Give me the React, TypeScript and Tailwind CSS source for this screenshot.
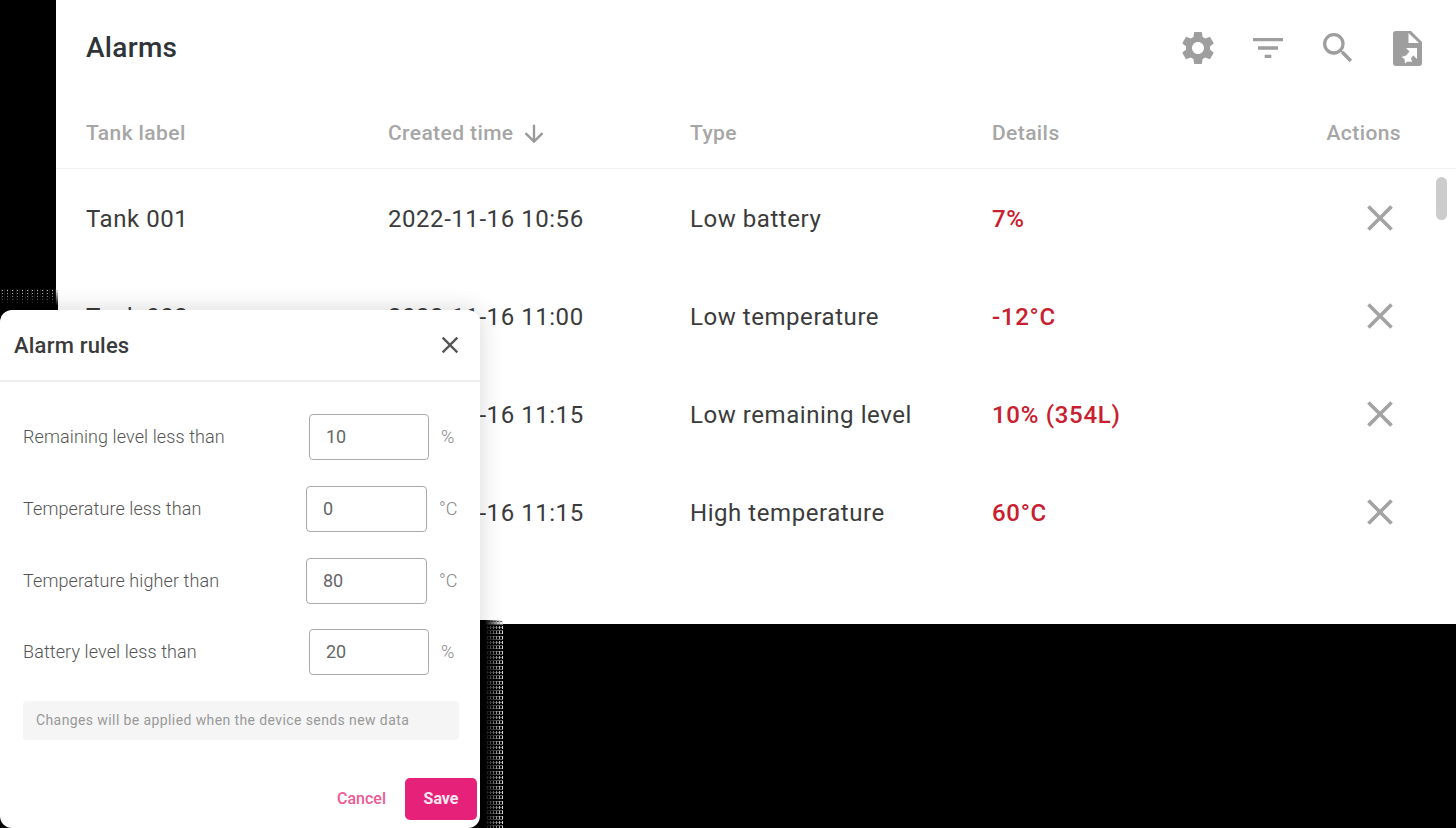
import { MdSettings, MdFilterList, MdSearch, MdClose, MdArrowDownward } from "react-icons/md";

const ROWS = [
  { tank: "Tank 001", time: "2022-11-16 10:56", type: "Low battery", details: "7%" },
  { tank: "Tank 002", time: "2022-11-16 11:00", type: "Low temperature", details: "-12°C" },
  { tank: "Tank 003", time: "2022-11-16 11:15", type: "Low remaining level", details: "10% (354L)" },
  { tank: "Tank 004", time: "2022-11-16 11:15", type: "High temperature", details: "60°C" },
];

const RULES = [
  { label: "Remaining level less than", value: "10", unit: "%" },
  { label: "Temperature less than", value: "0", unit: "°C" },
  { label: "Temperature higher than", value: "80", unit: "°C" },
  { label: "Battery level less than", value: "20", unit: "%" },
];

const FileIcon = () => (
  <svg viewBox="0 0 29 35" className="ml-[5px] h-[35px] w-[29px] fill-[#9e9e9e]">
    <path d="M3 0H18L29 11V32a3 3 0 0 1-3 3H3a3 3 0 0 1-3-3V3a3 3 0 0 1 3-3Z" />
    <path d="M15.500 2 26 12H15.500Z" fill="#fff" />
    <path
      d="M13 17H24V28L20.500 24.500 18 27 19 31 14.500 30.500 12 32.500 11.500 28 8.500 26 13 24.500 16.500 20.500Z"
      fill="#fff"
    />
  </svg>
);

const Rule = ({ label, value, unit }: { label: string; value: string; unit: string }) => {
  const percent = unit === "%";
  return (
    <div className="flex h-[46px] items-center last:-mt-px">
      <div className="flex-1 text-lg font-light tracking-[0.1px] text-[#555]">{label}</div>
      <div
        className={`flex h-[46px] items-center rounded-[4px] border border-[#aaa] pl-4 text-lg text-[#666] ${
          percent ? "w-[120px]" : "w-[121px]"
        }`}
      >
        {value}
      </div>
      <div className={`ml-3 text-lg font-light text-[#888] ${percent ? "w-[29px]" : "w-[31px]"}`}>{unit}</div>
    </div>
  );
};

export default function App() {
  return (
    <div className="relative h-[828px] w-[1456px] overflow-hidden bg-black font-['Roboto',sans-serif]">
      <div className="ml-14 h-[624px] bg-white">
        <div className="flex h-24 items-center justify-between pl-[30px] pr-[34px]">
          <h1 className="text-[28px] font-medium tracking-[0.3px] text-[#2f3439]">Alarms</h1>
          <div className="flex items-center gap-[30px] text-[#9e9e9e]">
            <MdSettings size={40} />
            <MdFilterList size={40} />
            <MdSearch size={40} />
            <FileIcon />
          </div>
        </div>

        <div className="grid h-[73px] grid-cols-[302px_302px_302px_1fr_auto] items-center border-b border-[#f2f2f2] pl-[30px] pr-[55px] pt-1 text-[21px] font-medium tracking-[0.4px] text-[#a6a6a6]">
          <div>Tank label</div>
          <div className="flex items-center gap-1.5">
            Created time
            <MdArrowDownward size={28} className="text-[#999]" />
          </div>
          <div>Type</div>
          <div>Details</div>
          <div>Actions</div>
        </div>

        <div className="relative">
          {ROWS.map((row) => (
            <div
              key={row.tank}
              className="grid h-[98px] grid-cols-[302px_302px_302px_1fr_auto] items-center pl-[30px] pr-[54px] pt-0.5 text-2xl tracking-[0.55px] text-[#3b3b3b]"
            >
              <div>{row.tank}</div>
              <div>{row.time}</div>
              <div>{row.type}</div>
              <div className="font-medium tracking-[0.7px] text-[#c8202f]">{row.details}</div>
              <MdClose size={44} className="-mt-0.5 text-[#a3a3a3]" />
            </div>
          ))}
          <div className="absolute right-[9px] top-2 h-[43px] w-[11px] rounded-full bg-[#cccccc]" />
        </div>
      </div>

      {/* dithered edge of the dialog shadow on the black page */}
      <div className="absolute left-0 top-[289px] h-[21px] w-[58px] bg-[linear-gradient(to_bottom,transparent,#000_80%),radial-gradient(#ddd_0.6px,transparent_0.8px),radial-gradient(#777_0.6px,transparent_0.8px)] bg-[length:100%_100%,5px_3px,3px_2px]" />
      <div className="absolute left-[480px] top-[620px] h-[208px] w-[23px] bg-[linear-gradient(to_left,transparent,#000_80%),radial-gradient(#ddd_0.6px,transparent_0.8px),radial-gradient(#777_0.6px,transparent_0.8px)] bg-[length:100%_100%,3px_5px,2px_3px]" />

      <div className="absolute left-0 top-[310px] h-[518px] w-[480px] rounded-xl bg-white shadow-[0_0_24px_rgba(0,0,0,0.16)]">
        <div className="flex h-[72px] items-center justify-between border-b-2 border-[#eeeeee] pl-3.5 pr-4">
          <h2 className="text-[22px] font-medium tracking-[0.2px] text-[#3a3a3a]">Alarm rules</h2>
          <MdClose size={28} className="text-[#555]" />
        </div>
        <div className="flex flex-col gap-[26px] pl-[23px] pr-2.5 pt-8">
          {RULES.map((rule) => (
            <Rule key={rule.label} {...rule} />
          ))}
        </div>
        <div className="ml-[23px] mt-[26px] flex h-[39px] w-[436px] items-center rounded-sm bg-[#f5f5f5] pb-0.5 pl-[13px] text-sm tracking-[0.4px] text-[#999]">
          Changes will be applied when the device sends new data
        </div>
        <div className="mt-[38px] flex items-center justify-end gap-[19px] pr-[3px]">
          <span className="text-base font-medium text-[#ec5b93]">Cancel</span>
          <button className="h-[42px] w-[72px] rounded-[5px] bg-[#e6217a] text-base font-bold text-white/90">Save</button>
        </div>
      </div>
    </div>
  );
}
